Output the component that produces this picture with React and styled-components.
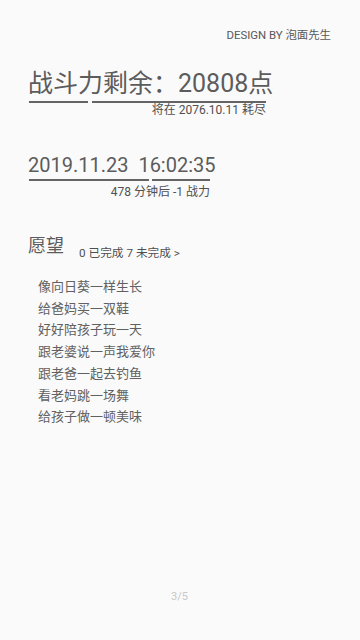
import React from 'react'
import styled, { createGlobalStyle } from 'styled-components'

const GlobalStyle = createGlobalStyle`
  html, body {
    margin: 0;
    padding: 0;
    background: #fafafa;
  }
  body {
    font-family: Roboto, "Noto Sans CJK SC", sans-serif;
    -webkit-font-smoothing: antialiased;
  }
`

const Screen = styled.div`
  width: 360px;
  min-height: 640px;
  box-sizing: border-box;
  padding: 28px 29px 36px 28px;
  display: flex;
  flex-direction: column;
  background: #fafafa;
  color: #5c5c5c;
`

const Credit = styled.div`
  align-self: flex-end;
  font-size: 11.4px;
  line-height: 14px;
  color: #585858;
`

const Stat = styled.div`
  display: flex;
  flex-direction: column;
  align-items: flex-start;
  margin-top: ${(p) => p.$gap}px;
`

const StatValue = styled.div`
  font-size: ${(p) => p.$size}px;
  line-height: ${(p) => p.$line}px;
  white-space: pre;
  color: #5c5c5c;
`

const Rule = styled.div`
  display: flex;
  gap: ${(p) => p.$gap}px;
  margin-top: ${(p) => p.$offset}px;
  padding-left: 1px;
`

const RuleBar = styled.span`
  display: block;
  height: 2px;
  background: #646464;
`

const Caption = styled.div`
  box-sizing: border-box;
  padding-left: 1px;
  margin-top: ${(p) => p.$offset}px;
  font-size: 12px;
  line-height: 14px;
  text-align: right;
  white-space: nowrap;
  color: #505050;
`

const WishHeader = styled.div`
  display: flex;
  align-items: flex-start;
  gap: 15px;
  margin-top: 36px;
`

const WishTitle = styled.h2`
  margin: 0;
  font-size: 18px;
  font-weight: 400;
  line-height: 22px;
  color: #5c5c5c;
`

const WishStats = styled.span`
  margin-top: 11px;
  font-size: 11.7px;
  line-height: 14px;
  color: #505050;
`

const WishList = styled.ul`
  list-style: none;
  margin: 16px 0 0;
  padding: 0 0 0 10px;
`

const WishItem = styled.li`
  font-size: 13px;
  line-height: 21.7px;
  color: #616161;
`

const Pager = styled.div`
  margin-top: auto;
  align-self: center;
  font-size: 11px;
  line-height: 14px;
  color: #c8c8c8;
`

function StatBlock({ value, size, line, gap, segments, segGap, ruleOffset, caption, captionOffset }) {
  const total = segments.reduce((a, b) => a + b, 0) + segGap * (segments.length - 1) + 1

  return (
    <Stat $gap={gap}>
      <StatValue $size={size} $line={line}>{value}</StatValue>
      <Rule $gap={segGap} $offset={ruleOffset}>
        {segments.map((w, i) => (
          <RuleBar key={i} style={{ width: w }} />
        ))}
      </Rule>
      <Caption $offset={captionOffset} style={{ width: total }}>
        {caption}
      </Caption>
    </Stat>
  )
}

const wishes = [
  '像向日葵一样生长',
  '给爸妈买一双鞋',
  '好好陪孩子玩一天',
  '跟老婆说一声我爱你',
  '跟老爸一起去钓鱼',
  '看老妈跳一场舞',
  '给孩子做一顿美味',
]

export default function App() {
  return (
    <>
      <GlobalStyle />
      <Screen>
        <Credit>DESIGN BY 泡面先生</Credit>

        <StatBlock
          value="战斗力剩余：20808点"
          size={25}
          line={30}
          gap={27}
          segments={[59, 174]}
          segGap={4}
          ruleOffset={2}
          caption="将在 2076.10.11 耗尽"
          captionOffset={0}
        />

        <StatBlock
          value="2019.11.23  16:02:35"
          size={20}
          line={24}
          gap={36}
          segments={[120, 58]}
          segGap={3}
          ruleOffset={2}
          caption="478 分钟后 -1 战力"
          captionOffset={4}
        />

        <WishHeader>
          <WishTitle>愿望</WishTitle>
          <WishStats>0 已完成 7 未完成 &gt;</WishStats>
        </WishHeader>

        <WishList>
          {wishes.map((w) => (
            <WishItem key={w}>{w}</WishItem>
          ))}
        </WishList>

        <Pager>3/5</Pager>
      </Screen>
    </>
  )
}
